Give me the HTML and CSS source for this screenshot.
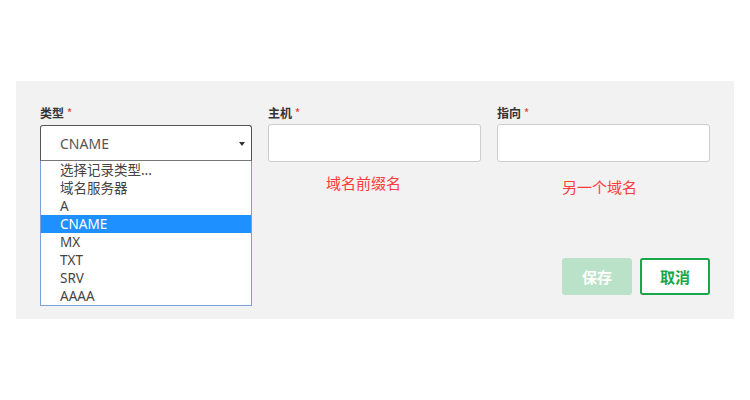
FILE: index.html
```html
<!DOCTYPE html>
<html lang="zh">
<head>
<meta charset="utf-8">
<link rel="stylesheet" href="styles.css">
</head>
<body>
<div class="panel">
  <div class="fields">
    <div class="field">
      <label class="label">类型 <span class="req">*</span></label>
      <div class="select-wrap">
        <div class="select">
          <span class="select-value">CNAME</span>
          <span class="arrow"></span>
        </div>
        <ul class="options">
          <li>选择记录类型...</li>
          <li>域名服务器</li>
          <li>A</li>
          <li class="active">CNAME</li>
          <li>MX</li>
          <li>TXT</li>
          <li>SRV</li>
          <li>AAAA</li>
        </ul>
      </div>
    </div>
    <div class="field">
      <label class="label">主机 <span class="req">*</span></label>
      <input class="input" type="text">
      <div class="hint hint-host">域名前缀名</div>
    </div>
    <div class="field">
      <label class="label">指向 <span class="req">*</span></label>
      <input class="input" type="text">
      <div class="hint hint-target">另一个域名</div>
    </div>
  </div>
  <div class="actions">
    <button class="btn btn-save">保存</button>
    <button class="btn btn-cancel">取消</button>
  </div>
</div>
</body>
</html>
```
FILE: styles.css
```css
* { box-sizing: border-box; }
html, body { margin: 0; padding: 0; background: #fff; }
body {
  font-family: "Noto Sans", "Noto Sans CJK SC", sans-serif;
  color: #444;
  padding: 81px 16px 0 16px;
}
.panel {
  background: #f2f2f2;
  height: 238px;
  padding: 24px 24px 0 24px;
  display: flex;
  flex-direction: column;
}
.fields {
  display: grid;
  grid-template-columns: 212px 213px 213px;
  column-gap: 16px;
}
.field { display: flex; flex-direction: column; }
.label {
  font-family: "Noto Sans CJK SC", sans-serif;
  font-size: 12px;
  font-weight: bold;
  line-height: 16px;
  color: #333;
  margin-bottom: 3px;
}
.req { color: #e04040; font-weight: normal; }
.select-wrap { position: relative; margin-top: 1px; }
.select {
  height: 36px;
  border: 1px solid #555;
  border-bottom-color: #777;
  border-radius: 3px 3px 0 0;
  background: #fff;
  display: flex;
  align-items: center;
  padding-left: 19px;
  position: relative;
}
.select-value { font-size: 14px; color: #555; }
.arrow {
  position: absolute;
  right: 6px;
  top: 16px;
  width: 0; height: 0;
  border-left: 3px solid transparent;
  border-right: 3px solid transparent;
  border-top: 4px solid #333;
}
.options {
  position: absolute;
  left: 0; top: 36px;
  width: 212px;
  margin: 0; padding: 0;
  list-style: none;
  background: #fff;
  border: 1px solid #7b9fde;
  border-top: none;
}
.options li {
  height: 18px;
  line-height: 18px;
  padding-left: 19px;
  font-size: 13.5px;
  color: #444;
  font-family: "Noto Sans", "Noto Sans CJK SC", sans-serif;
}
.options li.active { background: #1e90ff; color: #fff; }
.input {
  height: 38px;
  border: 1px solid #ccc;
  border-radius: 3px;
  background: #fff;
  width: 100%;
}
.hint {
  font-family: "Noto Sans CJK SC", sans-serif;
  font-size: 15px;
  color: #ff3b3b;
  line-height: 20px;
}
.hint-host { margin: 11px 0 0 58px; }
.hint-target { margin: 15px 0 0 65px; }
.actions {
  margin-top: auto;
  margin-bottom: 24px;
  display: flex;
  justify-content: flex-end;
  gap: 8px;
}
.btn {
  width: 70px;
  height: 37px;
  font-family: "Noto Sans CJK SC", sans-serif;
  font-size: 15px;
  font-weight: bold;
  border-radius: 3px;
  cursor: pointer;
}
.btn-save {
  background: #b9e2c9;
  border: 1px solid #b9e2c9;
  color: #fff;
}
.btn-cancel {
  background: #fff;
  border: 2px solid #19a64a;
  color: #19a64a;
}
```
